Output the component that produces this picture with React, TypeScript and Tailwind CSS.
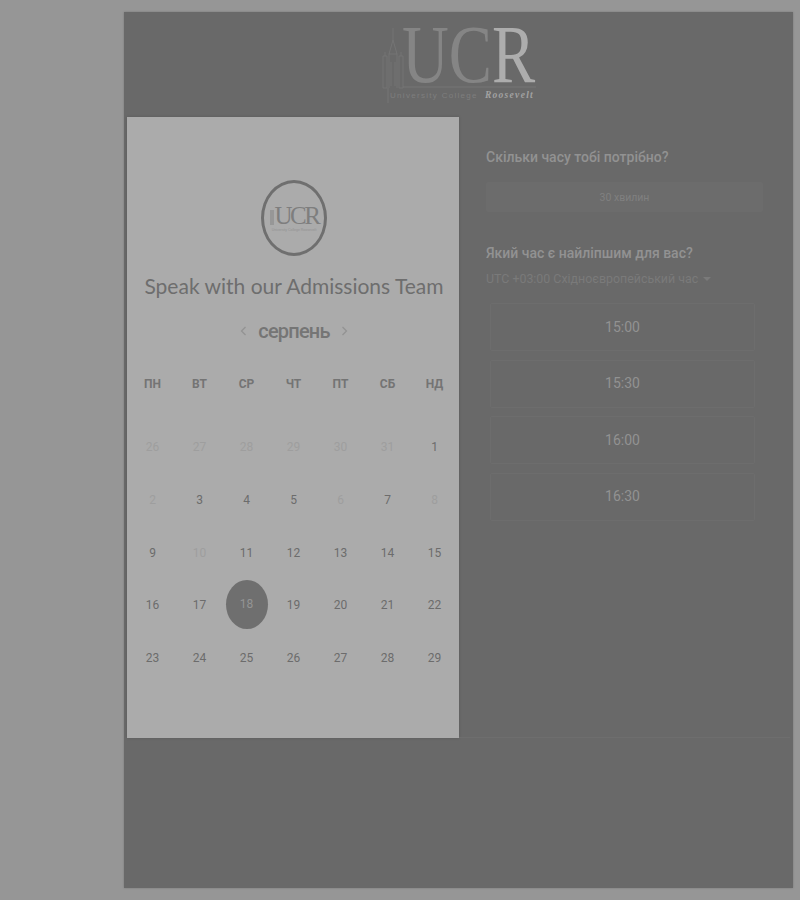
import React from "react";

type Day = { label: number; muted?: boolean; selected?: boolean };

const weekDays = ["ПН", "ВТ", "СР", "ЧТ", "ПТ", "СБ", "НД"];
const slots = ["15:00", "15:30", "16:00", "16:30"];

const days: Day[] = [
  { label: 26, muted: true },
  { label: 27, muted: true },
  { label: 28, muted: true },
  { label: 29, muted: true },
  { label: 30, muted: true },
  { label: 31, muted: true },
  { label: 1 },
  { label: 2, muted: true },
  { label: 3 },
  { label: 4 },
  { label: 5 },
  { label: 6, muted: true },
  { label: 7 },
  { label: 8, muted: true },
  { label: 9 },
  { label: 10, muted: true },
  { label: 11 },
  { label: 12 },
  { label: 13 },
  { label: 14 },
  { label: 15 },
  { label: 16 },
  { label: 17 },
  { label: 18, selected: true },
  { label: 19 },
  { label: 20 },
  { label: 21 },
  { label: 22 },
  { label: 23 },
  { label: 24 },
  { label: 25 },
  { label: 26 },
  { label: 27 },
  { label: 28 },
  { label: 29 },
];

const HeaderLogo = () => (
  <svg width="160" height="78" viewBox="0 0 160 78" fill="none">
    <path
      d="M13 2v12M13 14l-4 14h8zM9 28v34M17 28v34M3 30h4v32H3zM19 30h4v32h-4zM5 30v-4M21 30v-4M11 36v24M15 36v24"
      stroke="#7a7a7a"
      strokeWidth="0.7"
    />
    <path d="M23 61h133M8 62v15" stroke="#7d7d7d" strokeWidth="0.7" />
    <g transform="translate(22 56) scale(0.78 1)">
      <text fontFamily="Liberation Serif, serif" fontSize="83" fill="#858585">
        UC<tspan fill="#adadad">R</tspan>
      </text>
    </g>
    <text x="10" y="72" fontFamily="Liberation Sans, sans-serif" fontSize="8" letterSpacing="1.3" fill="#7e7e7e">
      University College
      <tspan dx="7" fontFamily="Liberation Serif, serif" fontStyle="italic" fontWeight="700" fontSize="9.5" letterSpacing="1.3" fill="#a2a2a2">
        Roosevelt
      </tspan>
    </text>
  </svg>
);

const BadgeLogo = () => (
  <div className="w-[66px] h-[76px] rounded-[50%] border-[3px] border-[#6f6f6f] flex flex-col items-center justify-center">
    <div className="flex items-center">
      <span className="w-[4px] h-[15px] bg-[#979797] mr-[1px] mt-[3px]" />
      <span className="font-['Liberation_Serif'] text-[25px] leading-none tracking-[-2.5px] text-[#7e7e7e]">UCR</span>
    </div>
    <span className="font-['Liberation_Sans'] text-[3.5px] leading-none text-[#929292] mt-[1px]">University College Roosevelt</span>
  </div>
);

const Calendar = () => (
  <section className="w-[332px] h-[621px] bg-[#ababab] shadow-[0_0_3px_rgba(0,0,0,0.15)] pl-[2px] flex flex-col">
    <div className="flex justify-center pt-[63px]">
      <BadgeLogo />
    </div>
    <h1 className="mt-[14px] text-center font-['Lato'] text-[21px] leading-[32px] text-[#6e6e6e] whitespace-nowrap opacity-[0.999]">
      Speak with our Admissions Team
    </h1>
    <div className="mt-[14px] flex items-center justify-center gap-[11px] h-[30px] font-['Roboto'] text-[#757575] opacity-[0.999]">
      <svg width="7" height="10" viewBox="0 0 7 10" fill="none" stroke="#929292" strokeWidth="1.2">
        <path d="M5.5 1 1.5 5l4 4" />
      </svg>
      <span className="text-[20px] font-medium tracking-[-0.8px]">серпень</span>
      <svg width="7" height="10" viewBox="0 0 7 10" fill="none" stroke="#929292" strokeWidth="1.2">
        <path d="M1.5 1l4 4-4 4" />
      </svg>
    </div>
    <div className="mt-[28px] grid grid-cols-[repeat(7,47px)] font-['Roboto'] text-[12px] font-bold text-[#747474] opacity-[0.999]">
      {weekDays.map((d) => (
        <div key={d} className="h-[20px] flex items-center justify-center">
          {d}
        </div>
      ))}
    </div>
    <div className="mt-[27px] grid grid-cols-[repeat(7,47px)] auto-rows-[52.7px] font-['Roboto'] text-[12px] opacity-[0.999]">
      {days.map((d, i) => (
        <div key={i} className="flex items-center justify-center">
          {d.selected ? (
            <span className="w-[42px] h-[49px] -mt-[2px] rounded-[50%] bg-[#6f6f6f] text-[#949494] flex items-center justify-center">
              {d.label}
            </span>
          ) : (
            <span className={d.muted ? "text-[#9e9e9e]" : "text-[#6c6c6c]"}>{d.label}</span>
          )}
        </div>
      ))}
    </div>
  </section>
);

const Booking = () => (
  <section className="w-[331px] h-[621px] pl-[27px] pt-[30px] font-['Roboto'] border-b border-[#6e6e6e]">
    <h2 className="text-[14px] leading-[20px] font-medium text-[#929292]">Скільки часу тобі потрібно?</h2>
    <div className="mt-[15px] w-[277px] h-[30px] rounded-[2px] bg-[#6c6c6c] flex items-center justify-center pt-[1px] text-[10.5px] text-[#808080]">
      30 хвилин
    </div>
    <h2 className="mt-[31px] text-[14px] leading-[20px] font-medium text-[#929292]">Який час є найліпшим для вас?</h2>
    <div className="mt-[8px] flex items-center gap-[5px] text-[12.4px] leading-[16px] text-[#7a7a7a]">
      <span>UTC +03:00 Східноєвропейський час</span>
      <span className="w-0 h-0 border-x-[4px] border-x-transparent border-t-[4px] border-t-[#7a7a7a]" />
    </div>
    <div className="mt-[16px] ml-[4px] w-[265px] flex flex-col gap-[8.5px]">
      {slots.map((s) => (
        <div key={s} className="h-[48px] rounded-[2px] border border-[#6d6d6d] flex items-center justify-center text-[14px] text-[#929292]">
          {s}
        </div>
      ))}
    </div>
  </section>
);

export default function App() {
  return (
    <div className="w-[800px] h-[900px] bg-[#969696] pt-[12px] pl-[124px] overflow-hidden">
      <main className="w-[669px] h-[876px] bg-[#696969] opacity-[0.999] shadow-[0_0_2px_rgba(0,0,0,0.2)] pl-[3px]">
        <header className="h-[105px] flex justify-center pt-[14px]">
          <HeaderLogo />
        </header>
        <div className="flex">
          <Calendar />
          <Booking />
        </div>
      </main>
    </div>
  );
}
